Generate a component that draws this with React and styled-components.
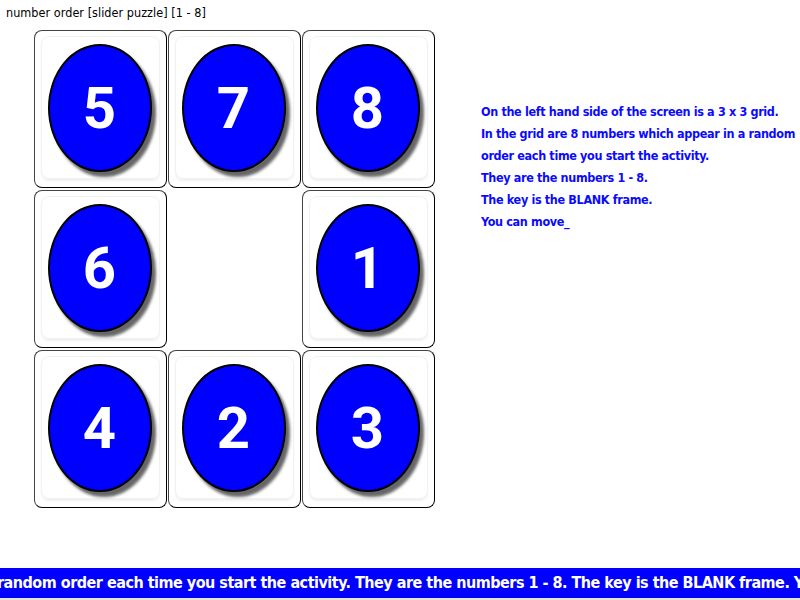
import React from 'react'
import styled, { createGlobalStyle } from 'styled-components'

const GlobalStyle = createGlobalStyle`
    html, body {
        margin: 0;
        padding: 0;
        background: #ffffff;
    }
    body {
        font-family: "Comic Sans MS", "DejaVu Sans Condensed", "DejaVu Sans", sans-serif;
    }
`

const Page = styled.div`
    height: 100vh;
    display: flex;
    flex-direction: column;
    overflow: hidden;
`

const Title = styled.div`
    height: 24px;
    padding: 5px 0 0 6px;
    box-sizing: border-box;
    font-size: 12.5px;
    letter-spacing: 0.05px;
    color: #000;
    line-height: 16px;
`

const Main = styled.div`
    display: flex;
    padding: 6px 0 0 34px;
`

const Board = styled.div`
    display: grid;
    grid-template-columns: repeat(3, 133px);
    grid-template-rows: repeat(3, 158px);
    column-gap: 1px;
    row-gap: 2px;
`

const Cell = styled.div`
    position: relative;
    box-sizing: border-box;
    border: 1px solid #444;
    border-right-color: #000;
    border-bottom-color: #000;
    border-radius: 8px;
    background: #fff;
    display: flex;
    align-items: center;
    justify-content: center;
    visibility: ${({ $blank }) => ($blank ? 'hidden' : 'visible')};
`

const Inner = styled.div`
    position: absolute;
    inset: 5px 6px 8px 6px;
    border-radius: 8px;
    border: 1px solid #f1f1f1;
    box-shadow: 0 2px 2px rgba(0, 0, 0, 0.06);
`

const Ball = styled.div`
    position: relative;
    width: 100px;
    height: 124px;
    margin: -2px 2px 0 0;
    border-radius: 50%;
    background: #0000ff;
    border: 2px solid #000;
    box-shadow: 4px 5px 3px rgba(0, 0, 0, 0.6);
    display: flex;
    align-items: center;
    justify-content: center;
    color: #fff;
    font-family: Roboto, "Liberation Sans", sans-serif;
    font-weight: 700;
    font-size: 58px;
    line-height: 1;
`

const Info = styled.div`
    margin: 71px 0 0 46px;
    color: #0a0aff;
    font-size: 12.5px;
    font-weight: 700;
    line-height: 22px;
    letter-spacing: -0.35px;
    white-space: nowrap;
`

const Ticker = styled.div`
    margin-top: auto;
    height: 30px;
    background: #0000ff;
    color: #fff;
    font-size: 16px;
    font-weight: 700;
    line-height: 30px;
    letter-spacing: -0.5px;
    white-space: nowrap;
    overflow: hidden;
`

const TickerText = styled.span`
    display: inline-block;
    margin-left: -3px;
`

const Strip = styled.div`
    height: 2px;
    background: #e8e2d6;
`

const tiles = [5, 7, 8, 6, null, 1, 4, 2, 3]

const lines = [
    'On the left hand side of the screen is a 3 x 3 grid.',
    'In the grid are 8 numbers which appear in a random',
    'order each time you start the activity.',
    'They are the numbers 1 - 8.',
    'The key is the BLANK frame.',
    'You can move_',
]

const App = () => {
    return (
        <>
            <GlobalStyle />
            <Page>
                <Title>number order [slider puzzle] [1 - 8]</Title>
                <Main>
                    <Board>
                        {tiles.map((n, i) => (
                            <Cell key={i} $blank={n === null}>
                                <Inner />
                                {n !== null && <Ball>{n}</Ball>}
                            </Cell>
                        ))}
                    </Board>
                    <Info>
                        {lines.map((l) => (
                            <div key={l}>{l}</div>
                        ))}
                    </Info>
                </Main>
                <Ticker>
                    <TickerText>
                        random order each time you start the activity. They are the numbers 1 - 8. The key is the BLANK frame. You can move
                    </TickerText>
                </Ticker>
                <Strip />
            </Page>
        </>
    )
}

export default App
